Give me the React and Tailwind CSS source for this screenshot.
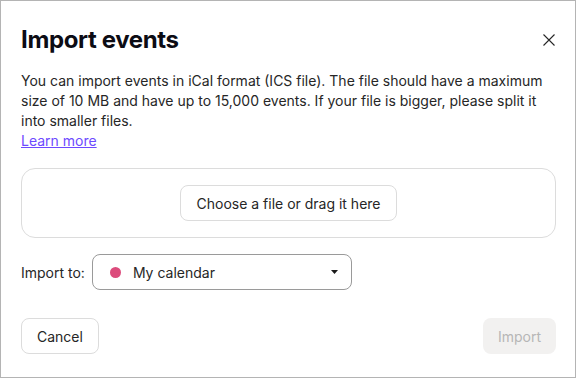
export default function App() {
  return (
    <div className="w-[576px] h-[378px] bg-white border border-[#b4b4b4] pl-5 pr-[19px] pt-[23px] pb-[23px] flex flex-col text-[#262626] font-['Inter',sans-serif]">
      {/* Header */}
      <div className="flex items-center justify-between h-8">
        <h1 className="text-[24px] leading-8 font-bold tracking-[-0.015em] text-[#0c0c14]">Import events</h1>
        <svg className="w-3 h-3 mr-px text-[#262626]" viewBox="0 0 12 12" fill="none" stroke="currentColor" strokeWidth="1.1">
          <path d="M0.5 0.5L11.5 11.5M11.5 0.5L0.5 11.5" />
        </svg>
      </div>

      {/* Description */}
      <p className="mt-[15px] text-[14px] leading-5">
        You can import events in iCal format (ICS file). The file should have a maximum size of 10 MB and have up to 15,000 events. If your file is bigger, please split it into smaller files.
        <br />
        <a href="#" className="text-[#6d4aff] underline">Learn more</a>
      </p>

      {/* Dropzone */}
      <div className="mt-[17px] h-[70px] border border-[#dcdcdc] rounded-[14px] flex items-center justify-center">
        <button className="h-9 px-[15px] rounded-lg border border-[#dcdcdc] bg-white text-[14px]">
          Choose a file or drag it here
        </button>
      </div>

      {/* Calendar select */}
      <div className="mt-4 flex items-center gap-[7px]">
        <span className="text-[14px]">Import to:</span>
        <div className="w-[260px] h-9 border border-[#9a9a9a] rounded-lg flex items-center pl-[17px] pr-[13px]">
          <span className="w-[11px] h-[11px] rounded-full bg-[#dc4c7c]" />
          <span className="ml-3 text-[14px] flex-1">My calendar</span>
          <svg className="w-[7px] h-1" viewBox="0 0 7 4" fill="#1a1a1a">
            <path d="M0 0H7L3.5 4Z" />
          </svg>
        </div>
      </div>

      {/* Footer */}
      <div className="mt-auto flex items-center justify-between">
        <button className="h-9 px-[15px] rounded-lg border border-[#dcdcdc] bg-white text-[14px]">Cancel</button>
        <button className="h-9 px-[15px] rounded-lg bg-[#f2f1f0] text-[14px] text-[#b6b6b6]">Import</button>
      </div>
    </div>
  );
}
